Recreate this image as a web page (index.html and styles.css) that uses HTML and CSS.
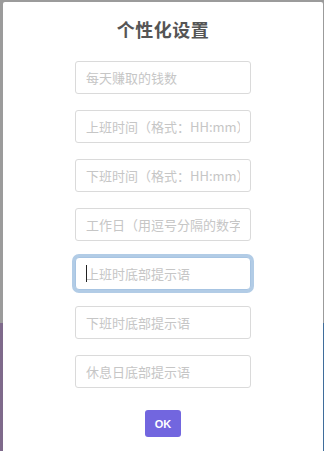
FILE: index.html
```html
<!DOCTYPE html>
<html lang="zh-CN">
<head>
<meta charset="utf-8">
<title>个性化设置</title>
<link rel="stylesheet" href="styles.css">
</head>
<body>
<div class="modal">
  <h2 class="title">个性化设置</h2>
  <form class="form">
    <input class="field" type="text" placeholder="每天赚取的钱数">
    <input class="field" type="text" placeholder="上班时间（格式：HH:mm）">
    <input class="field" type="text" placeholder="下班时间（格式：HH:mm）">
    <input class="field" type="text" placeholder="工作日（用逗号分隔的数字，如1,2,3,4,5）">
    <div class="focus-wrap">
      <input class="field focused" type="text" placeholder="上班时底部提示语">
    </div>
    <input class="field" type="text" placeholder="下班时底部提示语">
    <input class="field" type="text" placeholder="休息日底部提示语">
    <button class="ok" type="button">OK</button>
  </form>
</div>
</body>
</html>
```

FILE: styles.css
```css
html, body {
  margin: 0;
  padding: 0;
  height: 100%;
}
body {
  background:
    linear-gradient(to bottom, #9b9b9b 0, #9b9b9b 323px, transparent 323px),
    linear-gradient(to right, #7f6a8b 0, #6d6c98 50%, #3f6d9b 100%);
  overflow: hidden;
  font-family: "Noto Sans CJK SC", "Noto Sans", sans-serif;
}
.modal {
  box-sizing: border-box;
  margin: 2px 0 0 3px;
  width: 320px;
  height: 449px;
  background: #fff;
  border-radius: 2px 2px 0 0;
  padding-top: 14px;
}
.title {
  margin: 0;
  text-align: center;
  font-size: 18px;
  line-height: 26px;
  font-weight: 700;
  color: #555;
  letter-spacing: 0.5px;
}
.form {
  margin-top: 19px;
  display: flex;
  flex-direction: column;
  align-items: center;
  gap: 16px;
}
.field {
  box-sizing: border-box;
  width: 176px;
  height: 33px;
  margin: 0;
  padding: 0 10px;
  border: 1px solid #dadada;
  border-radius: 3px;
  background: #fff;
  font-family: "Noto Sans CJK SC", "Noto Sans", sans-serif;
  font-size: 13px;
  color: #333;
  outline: none;
}
.field::placeholder {
  color: #c6c6c6;
  opacity: 1;
}
.focus-wrap {
  position: relative;
  width: 176px;
  height: 33px;
}
.focus-wrap .field {
  display: block;
}
.focused {
  border-color: #a7c4e2;
  box-shadow: 0 0 0 3px #b2cce6;
  border-radius: 4px;
}
.focus-wrap::after {
  content: "";
  position: absolute;
  left: 11px;
  top: 8px;
  width: 1px;
  height: 17px;
  background: #222;
}
.ok {
  margin-top: 6px;
  width: 36px;
  height: 27px;
  padding: 0;
  border: none;
  border-radius: 3px;
  background: #7266df;
  color: #fff;
  font-family: "Liberation Sans", Arial, sans-serif;
  font-weight: 700;
  font-size: 11px;
  cursor: pointer;
}
```
